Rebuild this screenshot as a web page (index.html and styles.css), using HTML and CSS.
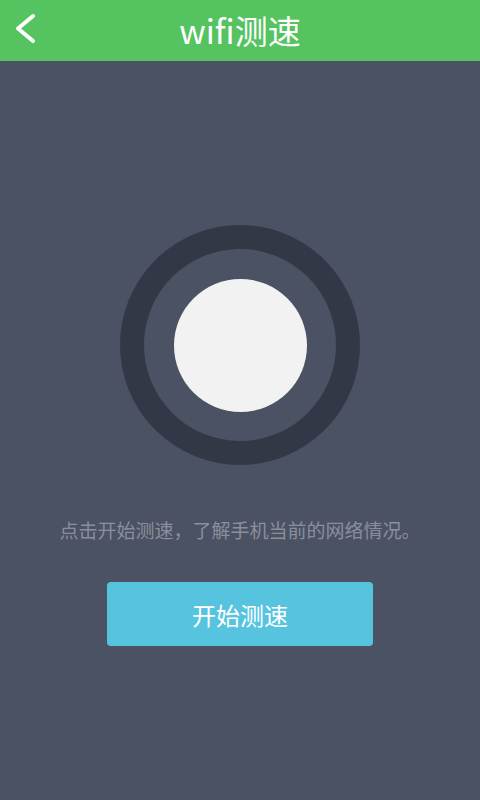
FILE: index.html
```html
<!DOCTYPE html>
<html lang="zh-CN">
<head>
    <meta charset="UTF-8">
    <meta name="viewport" content="width=device-width, initial-scale=1.0">
    <title>wifi测速</title>
    <link rel="stylesheet" href="styles.css">
</head>
<body>
    <div class="header">
        <a class="back-btn" href="#">
            <svg width="24" height="34" viewBox="0 0 24 34">
                <path d="M19 4 L4 16.5 L19 29" fill="none" stroke="#ffffff" stroke-width="4" stroke-linecap="round" stroke-linejoin="round"/>
            </svg>
        </a>
        <h1 class="title">wifi测速</h1>
    </div>

    <div class="main">
        <div class="ring">
            <div class="dot"></div>
        </div>
        <p class="tip">点击开始测速，了解手机当前的网络情况。</p>
        <button class="start-btn">开始测速</button>
    </div>
</body>
</html>
```

FILE: styles.css
```css
body {
    margin: 0;
    width: 480px;
    height: 800px;
    background-color: #4b5263;
    font-family: "Noto Sans CJK SC", "Noto Sans", sans-serif;
    overflow: hidden;
}

.header {
    height: 61px;
    background-color: #55c35f;
    display: flex;
    align-items: center;
    justify-content: center;
    position: relative;
}

.back-btn {
    position: absolute;
    left: 14px;
    top: 12px;
    display: block;
    width: 24px;
    height: 34px;
}

.title {
    margin: 0;
    color: #ffffff;
    font-size: 33px;
    font-weight: normal;
    line-height: 61px;
}

.main {
    display: flex;
    flex-direction: column;
    align-items: center;
    padding-top: 164px;
}

.ring {
    width: 240px;
    height: 240px;
    box-sizing: border-box;
    border: 24px solid #323846;
    border-radius: 50%;
    display: flex;
    align-items: center;
    justify-content: center;
}

.dot {
    width: 133px;
    height: 133px;
    border-radius: 50%;
    background-color: #f2f2f2;
}

.tip {
    margin: 51px 0 0;
    color: #8a8f9b;
    font-size: 19px;
    line-height: 28px;
}

.start-btn {
    margin-top: 38px;
    width: 266px;
    height: 64px;
    border: none;
    border-radius: 4px;
    background-color: #56c4df;
    color: #ffffff;
    font-family: inherit;
    font-size: 24px;
    cursor: pointer;
}
```
